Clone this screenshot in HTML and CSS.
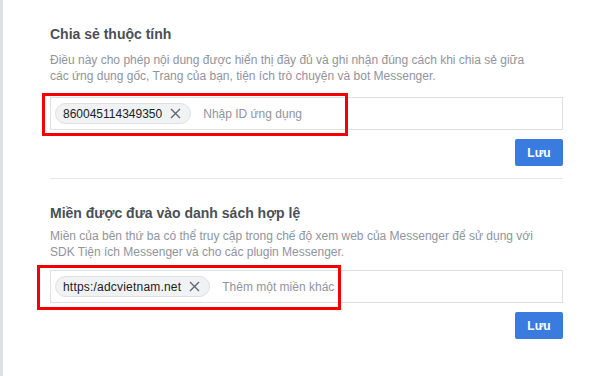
FILE: index.html
```html
<!DOCTYPE html>
<html>
<head>
  <title>Cài đặt Messenger</title>
  <link rel="stylesheet" href="styles.css">
</head>
<body>
  <div class="panel">
    <div class="section">
      <h2>Chia sẻ thuộc tính</h2>
      <p class="desc">Điều này cho phép nội dung được hiển thị đầy đủ và ghi nhận đúng cách khi chia sẻ giữa các ứng dụng gốc, Trang của bạn, tiện ích trò chuyện và bot Messenger.</p>
      <div class="field">
        <span class="tag">860045114349350
          <svg class="tag-x" width="11" height="11" viewBox="0 0 11 11"><path d="M1 1L10 10M10 1L1 10"/></svg>
        </span>
        <input type="text" class="field-input" placeholder="Nhập ID ứng dụng">
        <div class="highlight hl-first"></div>
      </div>
      <div class="actions">
        <button class="btn">Lưu</button>
      </div>
    </div>

    <div class="section section-domains">
      <h2>Miền được đưa vào danh sách hợp lệ</h2>
      <p class="desc">Miền của bên thứ ba có thể truy cập trong chế độ xem web của Messenger để sử dụng với SDK Tiện ích Messenger và cho các plugin Messenger.</p>
      <div class="field">
        <span class="tag tag-wide">https:/adcvietnam.net
          <svg class="tag-x" width="11" height="11" viewBox="0 0 11 11"><path d="M1 1L10 10M10 1L1 10"/></svg>
        </span>
        <input type="text" class="field-input" placeholder="Thêm một miền khác">
        <div class="highlight hl-second"></div>
      </div>
      <div class="actions">
        <button class="btn">Lưu</button>
      </div>
    </div>
  </div>
</body>
</html>
```

FILE: styles.css
```css
body {
  margin: 0;
  font-family: "Liberation Sans", Arial, Helvetica, sans-serif;
  background: #fff;
}

.panel {
  border-left: 3px solid #dfe0e4;
  padding: 0 47px;
  height: 376px;
  box-sizing: border-box;
}

.section {
  padding-top: 25px;
  padding-bottom: 12px;
  border-bottom: 1px solid #e5e6e9;
}

.section:last-child {
  border-bottom: none;
}

h2 {
  margin: 0;
  font-size: 14px;
  line-height: 18px;
  font-weight: bold;
  color: #4b4f56;
}

.desc {
  max-width: 490px;
  margin: 9px 0 0;
  font-size: 12px;
  line-height: 16px;
  color: #90949c;
}

.field {
  position: relative;
  display: flex;
  align-items: center;
  height: 33px;
  margin-top: 13px;
  padding: 0 4px;
  border: 1px solid #dddfe2;
  box-sizing: border-box;
}

.section-domains .desc {
  margin-top: 6px;
}

.section-domains .field {
  margin-top: 10px;
}

.tag {
  display: flex;
  align-items: center;
  height: 21px;
  padding: 0 9px 0 7px;
  border: 1px solid #dddfe2;
  border-radius: 11px;
  background: #f1f2f4;
  font-size: 12px;
  color: #1d2129;
  white-space: nowrap;
  box-sizing: border-box;
}

.tag-wide {
  letter-spacing: 0.2px;
}

.tag-x {
  margin-left: 8px;
  stroke: #606770;
  stroke-width: 1.4;
  fill: none;
}

.field-input {
  flex: 1;
  border: none;
  outline: none;
  margin-left: 12px;
  padding: 0;
  font-family: inherit;
  font-size: 12px;
  background: transparent;
}

.field-input::placeholder {
  color: #90949c;
}

.highlight {
  position: absolute;
  border: 3px solid #f40000;
  box-sizing: border-box;
  pointer-events: none;
}

.hl-first {
  left: -9px;
  top: -5px;
  width: 306px;
  height: 43px;
}

.hl-second {
  left: -14px;
  top: -6px;
  width: 304px;
  height: 45px;
}

.actions {
  display: flex;
  justify-content: flex-end;
  margin-top: 9px;
}

.btn {
  width: 48px;
  height: 27px;
  padding: 0;
  border: none;
  border-radius: 2px;
  background-color: #3a7be0;
  color: #fff;
  font-family: inherit;
  font-size: 12px;
  font-weight: bold;
  cursor: pointer;
}
```
